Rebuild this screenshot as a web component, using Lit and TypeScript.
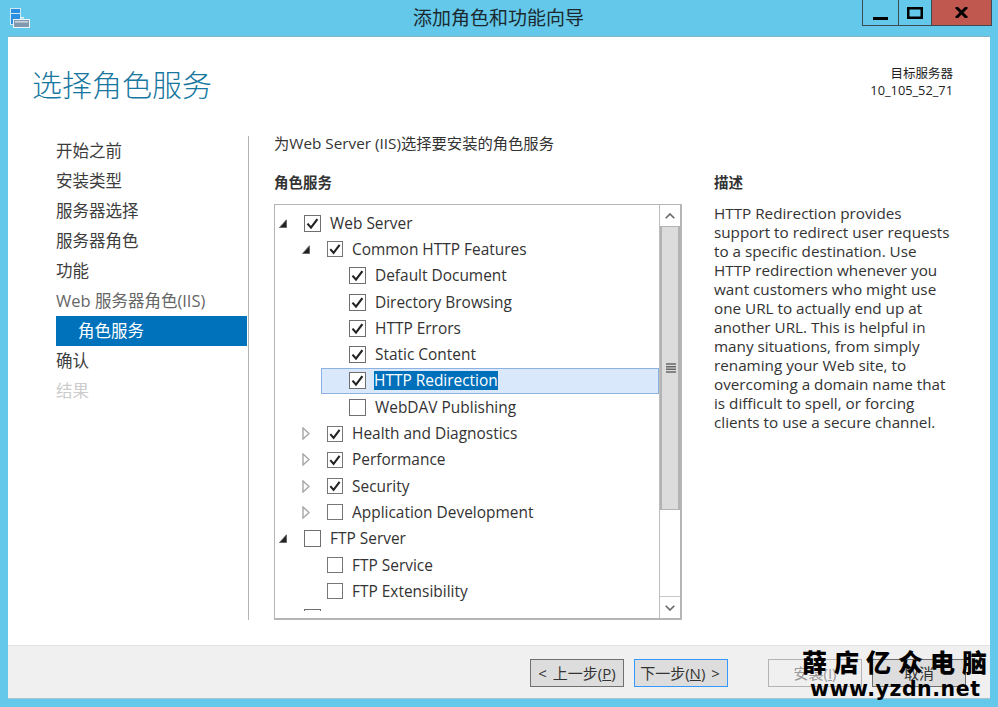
import { LitElement, html, css, svg } from "lit";
import { customElement } from "lit/decorators.js";

type Row = { level: number; exp?: "open" | "closed"; checked: boolean; label: string; selected?: boolean };

const ROWS: Row[] = [
  { level: 0, exp: "open", checked: true, label: "Web Server" },
  { level: 1, exp: "open", checked: true, label: "Common HTTP Features" },
  { level: 2, checked: true, label: "Default Document" },
  { level: 2, checked: true, label: "Directory Browsing" },
  { level: 2, checked: true, label: "HTTP Errors" },
  { level: 2, checked: true, label: "Static Content" },
  { level: 2, checked: true, label: "HTTP Redirection", selected: true },
  { level: 2, checked: false, label: "WebDAV Publishing" },
  { level: 1, exp: "closed", checked: true, label: "Health and Diagnostics" },
  { level: 1, exp: "closed", checked: true, label: "Performance" },
  { level: 1, exp: "closed", checked: true, label: "Security" },
  { level: 1, exp: "closed", checked: false, label: "Application Development" },
  { level: 0, exp: "open", checked: false, label: "FTP Server" },
  { level: 1, checked: false, label: "FTP Service" },
  { level: 1, checked: false, label: "FTP Extensibility" },
  { level: 0, checked: false, label: "Management Tools" },
];

const NAV = [
  { t: "开始之前" },
  { t: "安装类型" },
  { t: "服务器选择" },
  { t: "服务器角色" },
  { t: "功能" },
  { t: "Web 服务器角色(IIS)", c: "light" },
  { t: "角色服务", c: "active" },
  { t: "确认" },
  { t: "结果", c: "disabled" },
];

const DESC = [
  "HTTP Redirection provides",
  "support to redirect user requests",
  "to a specific destination. Use",
  "HTTP redirection whenever you",
  "want customers who might use",
  "one URL to actually end up at",
  "another URL. This is helpful in",
  "many situations, from simply",
  "renaming your Web site, to",
  "overcoming a domain name that",
  "is difficult to spell, or forcing",
  "clients to use a secure channel.",
];

@customElement("app-root")
export class AppRoot extends LitElement {
  static styles = css`
    :host {
      display: flex;
      flex-direction: column;
      width: 998px;
      height: 707px;
      position: relative;
      overflow: hidden;
      background: #63c8ea;
      font-family: "Open Sans", "Noto Sans CJK SC", sans-serif;
      color: #333;
    }
    .titlebar {
      height: 36px;
      flex: none;
      display: grid;
      grid-template-columns: 1fr auto 1fr;
      align-items: start;
    }
    .appicon { margin: 8px 0 0 10px; display: block; }
    .title {
      font-size: 19px;
      line-height: 36px;
      color: #1c2a30;
      margin-left: -1px;
    }
    .controls {
      justify-self: end;
      margin-right: 6px;
      display: flex;
      height: 26px;
      border: 1px solid #3c4a52;
      border-top: 0;
      box-sizing: border-box;
    }
    .ctl { width: 35px; display: flex; align-items: center; justify-content: center; border-right: 1px solid #3c4a52; }
    .ctl.max { width: 32px; }
    .ctl.close { width: 59px; border-right: 0; background: #c1584f; }
    .window {
      flex: 1;
      margin: 0 8px 8px;
      display: flex;
      flex-direction: column;
      background: #fff;
      border-top: 1px solid #7fb3c8;
      border-bottom: 1px solid #a9c4cf;
      min-height: 0;
    }
    .head {
      height: 92px;
      flex: none;
      display: flex;
      justify-content: space-between;
      padding: 0 37px 0 24px;
      box-sizing: border-box;
    }
    h1 {
      margin: 26px 0 0;
      font-size: 30px;
      line-height: 44px;
      font-weight: 300;
      color: #17779f;
    }
    .target {
      margin-top: 29px;
      text-align: right;
      font-size: 12.5px;
      line-height: 16px;
      color: #222;
    }
    .target .id { font-size: 12.8px; }
    .body {
      flex: 1;
      display: flex;
      min-height: 0;
      padding-top: 7px;
      padding-bottom: 25px;
    }
    nav {
      width: 191px;
      margin-left: 48px;
      margin-right: 1px;
      flex: none;
      display: flex;
      flex-direction: column;
    }
    .navitem {
      height: 30px;
      line-height: 30px;
      font-size: 16.5px;
      color: #3d3d3d;
      white-space: nowrap;
    }
    .navitem.light { color: #666; }
    .navitem.active { background: #0072bc; color: #fff; padding-left: 22px; }
    .navitem.disabled { color: #ccc; }
    .content {
      flex: 1;
      border-left: 1px solid #b4b4b4;
      padding-left: 25px;
      display: flex;
      flex-direction: column;
      min-width: 0;
    }
    .lead { font-size: 15.3px; line-height: 20px; margin-top: -3px; color: #333; height: 40px; white-space: nowrap; }
    .cols { display: flex; flex: 1; min-height: 0; }
    .left { width: 408px; display: flex; flex-direction: column; margin-right: 32px; flex: none; }
    .right { flex: 1; }
    h2 { margin: 0; font-size: 14.5px; font-weight: 700; line-height: 20px; height: 31px; color: #333; }
    .list {
      flex: 1;
      min-height: 0;
      display: flex;
      border: 1px solid #aaa;
      border-right-width: 2px;
      border-bottom-width: 2px;
      border-color: #b5b5b5;
    }
    .treewrap { flex: 1; min-width: 0; padding: 5px 0 7px; }
    .tree { height: 100%; overflow: hidden; }
    .row {
      height: 26.3px;
      display: flex;
      align-items: center;
      box-sizing: border-box;
      white-space: nowrap;
      font-size: 15.45px;
      color: #333;
    }
    .l0 { padding-left: 4px; }
    .l1 { padding-left: 27px; }
    .l2 { padding-left: 49px; }
    .row.selected {
      margin-left: 46px;
      padding-left: 2px;
      background: #d9e9fb;
      border: 1px solid #8db2e2;
    }
    .exp { width: 25px; flex: none; display: flex; }
    .cb { flex: none; display: block; margin-right: 9px; }
    .selected .cb { margin-right: 8px; }
    .label { line-height: 19px; padding: 0; }
    .selected .label { background: #0070bb; color: #fff; }
    .scroll {
      width: 20px;
      flex: none;
      border-left: 1px solid #bdbdbd;
      display: flex;
      flex-direction: column;
    }
    .sbtn { height: 21px; flex: none; display: flex; align-items: center; justify-content: center; }
    .sbtn.down { border-top: 1px solid #c8c8c8; }
    .thumb {
      height: 284px;
      flex: none;
      background: #dcdcdc;
      border: 2px solid #b3b3b3;
      border-top-width: 1px;
      border-bottom-width: 1px;
      box-sizing: border-box;
      display: flex;
      align-items: center;
      justify-content: center;
      padding-left: 2px;
    }
    .track { flex: 1; }
    .desc { font-size: 15.25px; line-height: 19px; color: #333; white-space: nowrap; }
    footer {
      height: 53px;
      flex: none;
      background: #f0f0f0;
      border-top: 1px solid #e3e3e3;
      box-sizing: border-box;
      display: flex;
      align-items: flex-start;
      padding: 13px 0 0 522px;
    }
    .btn {
      width: 94px;
      height: 28px;
      box-sizing: border-box;
      background: #dddddd;
      border: 1px solid #707070;
      font-size: 15px;
      word-spacing: 2px;
      line-height: 26px;
      text-align: center;
      color: #333;
      white-space: nowrap;
    }
    .btn.next { margin-left: 10px; border-color: #3399ff; padding-right: 2px; }
    .btn.install { margin-left: 40px; margin-right: 10px; background: #f0f0f0; border-color: #b4b4b4; color: #9a9a9a; }
    .mark { position: absolute; left: 802px; top: 646px; color: #000; pointer-events: none; white-space: nowrap; }
    .mark .cn { font-family: "Noto Sans CJK SC", sans-serif; font-weight: 900; font-size: 25px; line-height: 30px; letter-spacing: 7px; }
    .mark .url { font-family: "DejaVu Sans", sans-serif; font-weight: 700; font-size: 20.5px; line-height: 22px; margin: 2px 0 0 8px; letter-spacing: .55px; }
  `;

  private expander(e?: "open" | "closed") {
    if (e === "open")
      return html`<svg width="8" height="9" viewBox="0 0 8 9"><path d="M7.5 .8V8.5H.5Z" fill="#222" stroke="#666" stroke-width="1"/></svg>`;
    if (e === "closed")
      return html`<svg width="8" height="13" viewBox="0 0 8 13"><path d="M1 1L7 6.5L1 12Z" fill="#fff" stroke="#a6a6a6" stroke-width="1.4"/></svg>`;
    return "";
  }

  private checkbox(checked: boolean, level: number) {
    const s = level === 1 ? 16 : 17;
    return html`<svg class="cb" width=${s} height=${s} viewBox="0 0 17 17">
      <rect x=".5" y=".5" width="16" height="16" fill="#fff" stroke="#6f6f6f"/>
      ${checked ? svg`<path d="M3.5 8.6L7 12.6L13.4 4.2" fill="none" stroke="#222" stroke-width="2.2"/>` : ""}
    </svg>`;
  }

  render() {
    return html`
      <div class="titlebar">
        <svg class="appicon" width="21" height="21" viewBox="0 0 21 21">
          <rect x=".5" y=".5" width="10" height="16" fill="#2a8fe0" stroke="#cfe9f6"/>
          <rect x="1" y="5" width="9" height="1" fill="#cfe9f6"/>
          <rect x="10" y="9" width="4" height="1.5" fill="#e4f3fa"/>
          <rect x="3.5" y="11.5" width="16" height="8" fill="#8298ae" stroke="#eaf6fb"/>
          <rect x="5" y="13" width="13" height="1.6" fill="#c8d3dc"/>
        </svg>
        <div class="title">添加角色和功能向导</div>
        <div class="controls">
          <div class="ctl">
            <svg width="15" height="16" viewBox="0 0 15 16"><rect x="0" y="12" width="15" height="3" fill="#000"/></svg>
          </div>
          <div class="ctl max">
            <svg width="16" height="12" viewBox="0 0 16 12"><rect x="1.25" y="1.25" width="13.5" height="9.5" fill="none" stroke="#000" stroke-width="2.5"/></svg>
          </div>
          <div class="ctl close">
            <svg width="13" height="11" viewBox="0 0 13 11"><path d="M1 0L12 11M12 0L1 11" stroke="#000" stroke-width="3" fill="none"/></svg>
          </div>
        </div>
      </div>
      <div class="window">
        <div class="head">
          <h1>选择角色服务</h1>
          <div class="target">目标服务器<br /><span class="id">10_105_52_71</span></div>
        </div>
        <div class="body">
          <nav>
            ${NAV.map((n) => html`<div class="navitem ${n.c ?? ""}">${n.t}</div>`)}
          </nav>
          <div class="content">
            <div class="lead">为Web Server (IIS)选择要安装的角色服务</div>
            <div class="cols">
              <div class="left">
                <h2>角色服务</h2>
                <div class="list">
                  <div class="treewrap">
                    <div class="tree">
                      ${ROWS.map(
                        (r) => html`<div class="row l${r.level} ${r.selected ? "selected" : ""}">
                          <span class="exp">${this.expander(r.exp)}</span>
                          ${this.checkbox(r.checked, r.level)}
                          <span class="label">${r.label}</span>
                        </div>`
                      )}
                    </div>
                  </div>
                  <div class="scroll">
                    <div class="sbtn">
                      <svg width="10" height="6" viewBox="0 0 10 6"><path d="M.7 5.3L5 1L9.3 5.3" fill="none" stroke="#666" stroke-width="1.6"/></svg>
                    </div>
                    <div class="thumb">
                      <svg width="10" height="10" viewBox="0 0 10 10"><path d="M0 1H10M0 3.7H10M0 6.3H10M0 9H10" stroke="#666" stroke-width="1.4"/></svg>
                    </div>
                    <div class="track"></div>
                    <div class="sbtn down">
                      <svg width="10" height="6" viewBox="0 0 10 6"><path d="M.7 .7L5 5L9.3 .7" fill="none" stroke="#666" stroke-width="1.6"/></svg>
                    </div>
                  </div>
                </div>
              </div>
              <div class="right">
                <h2>描述</h2>
                <div class="desc">${DESC.map((l) => html`${l}<br />`)}</div>
              </div>
            </div>
          </div>
        </div>
        <footer>
          <div class="btn">&lt; 上一步(<u>P</u>)</div>
          <div class="btn next">下一步(<u>N</u>) &gt;</div>
          <div class="btn install">安装(<u>I</u>)</div>
          <div class="btn">取消</div>
        </footer>
      </div>
      <div class="mark">
        <div class="cn">薛店亿众电脑</div>
        <div class="url">www.yzdn.net</div>
      </div>
    `;
  }
}
